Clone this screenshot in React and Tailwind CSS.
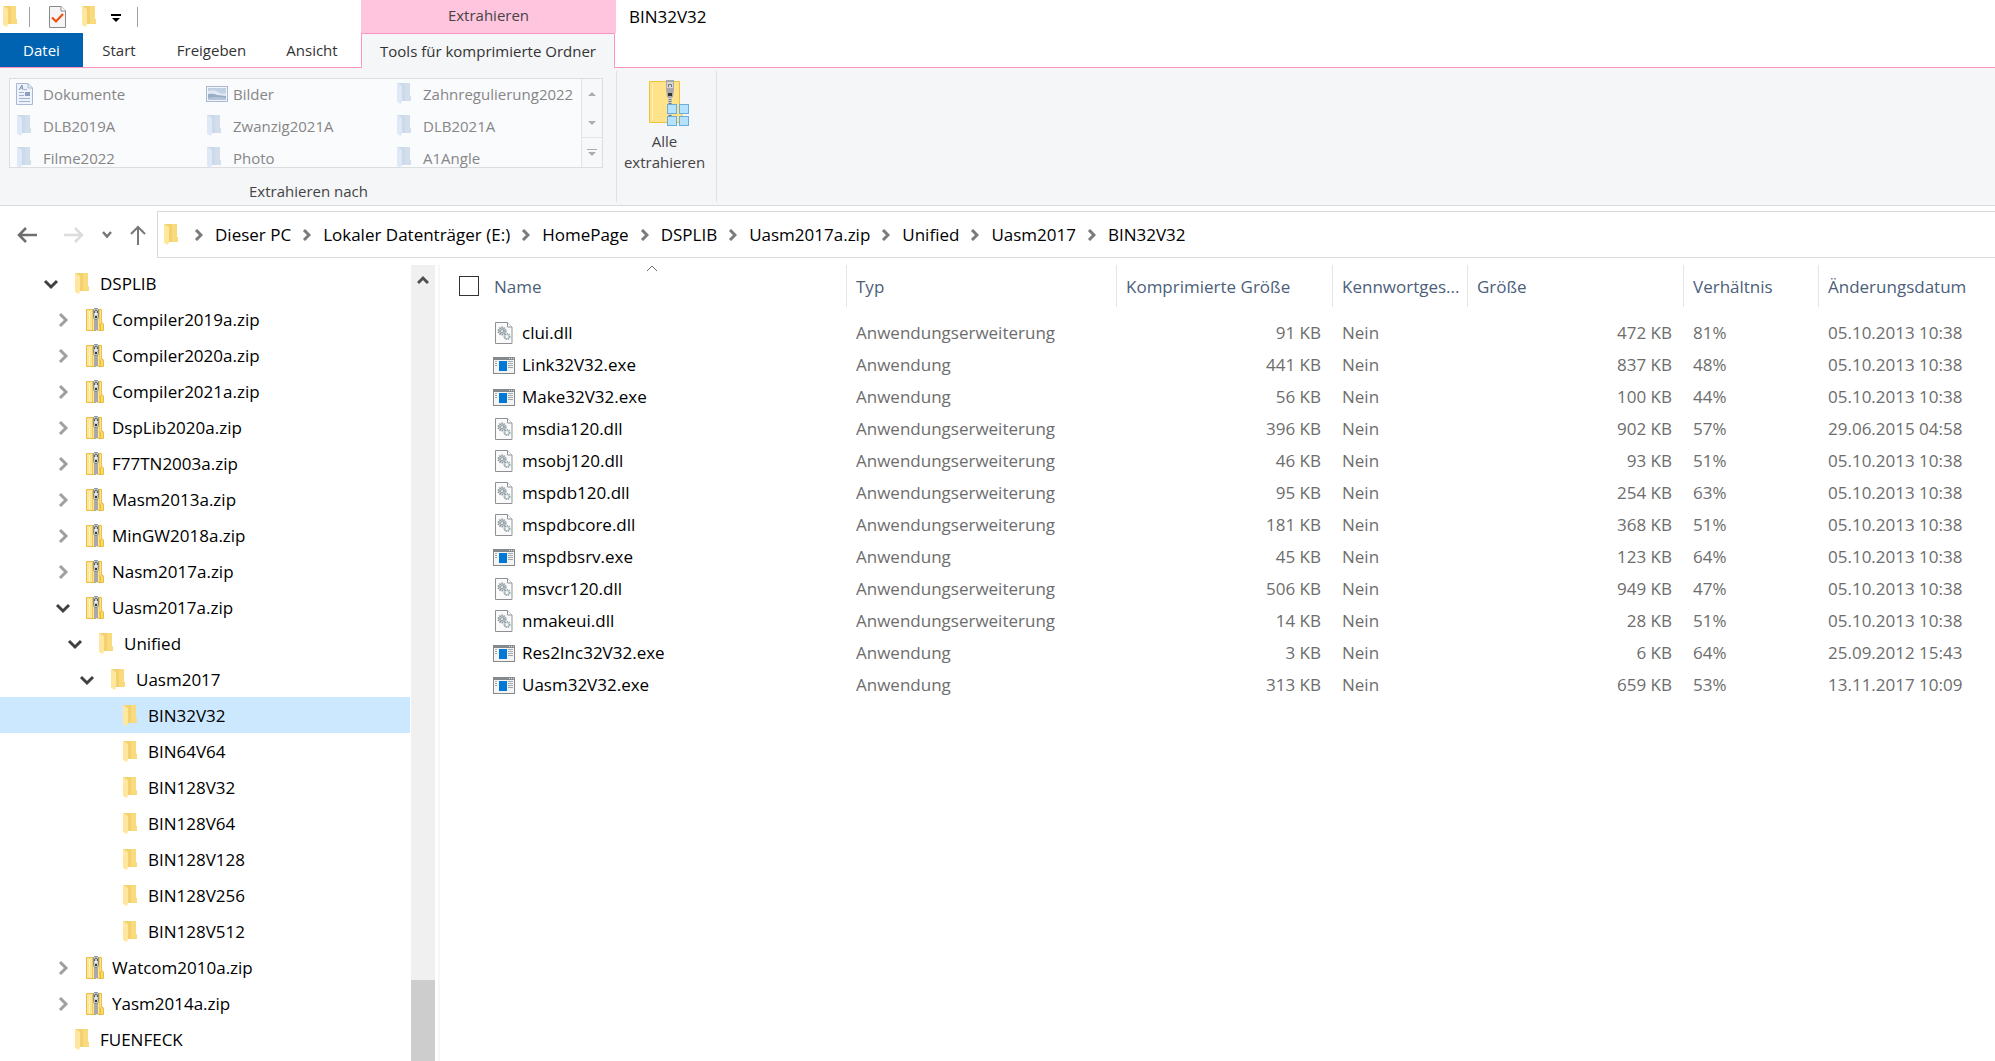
import React from 'react';
import clsx from 'clsx';

const tree = [
  { name: 'DSPLIB', level: 0, icon: 'folder', state: 'open' },
  { name: 'Compiler2019a.zip', level: 1, icon: 'zip', state: 'closed' },
  { name: 'Compiler2020a.zip', level: 1, icon: 'zip', state: 'closed' },
  { name: 'Compiler2021a.zip', level: 1, icon: 'zip', state: 'closed' },
  { name: 'DspLib2020a.zip', level: 1, icon: 'zip', state: 'closed' },
  { name: 'F77TN2003a.zip', level: 1, icon: 'zip', state: 'closed' },
  { name: 'Masm2013a.zip', level: 1, icon: 'zip', state: 'closed' },
  { name: 'MinGW2018a.zip', level: 1, icon: 'zip', state: 'closed' },
  { name: 'Nasm2017a.zip', level: 1, icon: 'zip', state: 'closed' },
  { name: 'Uasm2017a.zip', level: 1, icon: 'zip', state: 'open' },
  { name: 'Unified', level: 2, icon: 'folder', state: 'open' },
  { name: 'Uasm2017', level: 3, icon: 'folder', state: 'open' },
  { name: 'BIN32V32', level: 4, icon: 'folder', selected: true },
  { name: 'BIN64V64', level: 4, icon: 'folder' },
  { name: 'BIN128V32', level: 4, icon: 'folder' },
  { name: 'BIN128V64', level: 4, icon: 'folder' },
  { name: 'BIN128V128', level: 4, icon: 'folder' },
  { name: 'BIN128V256', level: 4, icon: 'folder' },
  { name: 'BIN128V512', level: 4, icon: 'folder' },
  { name: 'Watcom2010a.zip', level: 1, icon: 'zip', state: 'closed' },
  { name: 'Yasm2014a.zip', level: 1, icon: 'zip', state: 'closed' },
  { name: 'FUENFECK', level: 0, icon: 'folder' },
];

const indent = ['pl-[42px]', 'pl-[54px]', 'pl-[66px]', 'pl-[78px]', 'pl-[90px]'];

const DLL = 'Anwendungserweiterung';
const EXE = 'Anwendung';

const files = [
  ['clui.dll', DLL, '91 KB', 'Nein', '472 KB', '81%', '05.10.2013 10:38'],
  ['Link32V32.exe', EXE, '441 KB', 'Nein', '837 KB', '48%', '05.10.2013 10:38'],
  ['Make32V32.exe', EXE, '56 KB', 'Nein', '100 KB', '44%', '05.10.2013 10:38'],
  ['msdia120.dll', DLL, '396 KB', 'Nein', '902 KB', '57%', '29.06.2015 04:58'],
  ['msobj120.dll', DLL, '46 KB', 'Nein', '93 KB', '51%', '05.10.2013 10:38'],
  ['mspdb120.dll', DLL, '95 KB', 'Nein', '254 KB', '63%', '05.10.2013 10:38'],
  ['mspdbcore.dll', DLL, '181 KB', 'Nein', '368 KB', '51%', '05.10.2013 10:38'],
  ['mspdbsrv.exe', EXE, '45 KB', 'Nein', '123 KB', '64%', '05.10.2013 10:38'],
  ['msvcr120.dll', DLL, '506 KB', 'Nein', '949 KB', '47%', '05.10.2013 10:38'],
  ['nmakeui.dll', DLL, '14 KB', 'Nein', '28 KB', '51%', '05.10.2013 10:38'],
  ['Res2Inc32V32.exe', EXE, '3 KB', 'Nein', '6 KB', '64%', '25.09.2012 15:43'],
  ['Uasm32V32.exe', EXE, '313 KB', 'Nein', '659 KB', '53%', '13.11.2017 10:09'],
];

const headers = ['Typ', 'Komprimierte Größe', 'Kennwortges...', 'Größe', 'Verhältnis', 'Änderungsdatum'];

const crumbs = ['Dieser PC', 'Lokaler Datenträger (E:)', 'HomePage', 'DSPLIB', 'Uasm2017a.zip', 'Unified', 'Uasm2017', 'BIN32V32'];

const targets = [
  { name: 'Dokumente', icon: 'doc' },
  { name: 'Bilder', icon: 'picture' },
  { name: 'Zahnregulierung2022', icon: 'folder' },
  { name: 'DLB2019A', icon: 'folder' },
  { name: 'Zwanzig2021A', icon: 'folder' },
  { name: 'DLB2021A', icon: 'folder' },
  { name: 'Filme2022', icon: 'folder' },
  { name: 'Photo', icon: 'folder' },
  { name: 'A1Angle', icon: 'folder' },
];

const FolderIcon = ({ muted }) => (
  <svg width="18" height="22" viewBox="0 0 18 22" className="shrink-0">
    <path d="M1 0H14V13H15V18H5Z" fill={muted ? '#ccd9ea' : '#f3d170'} />
    <path d="M9 0H14V13H15V18H9Z" fill={muted ? '#d3deed' : '#f9da7c'} />
    <path d="M1 0L6 3V18L5 21L1 19Z" fill={muted ? '#dfe8f6' : '#ffe89d'} />
  </svg>
);

const ZipIcon = () => (
  <svg width="18" height="23" viewBox="0 0 18 23" className="shrink-0">
    <path d="M.5 1.500H15.500V22.500H.5Z" fill="#ffe591" stroke="#e8bf3f" />
    <path d="M14.500 22.500V16L16 14.500L17.500 16V22.500Z" fill="#fbd970" stroke="#e8bf3f" />
    <path d="M3.500 3V21" stroke="#fff3c4" />
    <path d="M6.500 2V22M13.500 2V22" stroke="#f1cc5c" />
    <rect x="8" y="10" width="4" height="13" fill="#dcdcd8" />
    <path d="M8 12h2M10 13h2M8 14h2M10 15h2M8 16h2M10 17h2M8 18h2M10 19h2M8 20h2M10 21h2M8 22h2" stroke="#777" />
    <path d="M7.500 1.500L8.500 .5H11.500L12.500 1.500V9.500L11.500 11.500H8.500L7.500 9.500Z" fill="#c9cacb" stroke="#8e9091" />
    <path d="M8.500 5V3Q10 1 11.500 3V5" fill="none" stroke="#5d6062" />
    <rect x="9" y="5" width="2" height="2" fill="#eee" />
    <rect x="9" y="8" width="2" height="2" fill="#333" />
  </svg>
);

const DllIcon = () => (
  <svg width="18" height="22" viewBox="0 0 18 22" className="shrink-0">
    <path d="M.5.5H12.500L17 5V21.500H.5Z" fill="#fafafa" stroke="#8f9294" />
    <path d="M12.500.5V5H17" fill="#fff" stroke="#8f9294" />
    <circle cx="7" cy="9" r="3.500" fill="#c8d0d5" stroke="#8d999f" strokeWidth="2" strokeDasharray="1.400 .8" />
    <circle cx="7" cy="9" r="1.500" fill="#fff" stroke="#8d999f" />
    <circle cx="12" cy="14.500" r="2.700" fill="#d5e0e6" stroke="#9aa7ad" strokeWidth="1.800" strokeDasharray="1.300 .7" />
    <circle cx="12" cy="14.500" r="1" fill="#fff" />
  </svg>
);

const ExeIcon = () => (
  <svg width="22" height="17" viewBox="0 0 22 17" className="shrink-0">
    <rect x=".5" y=".5" width="21" height="16" fill="#f4f4f4" stroke="#85898c" />
    <rect width="22" height="3" fill="#85898c" />
    <path d="M16 1.500h1M18 1.500h1M20 1.500h1" stroke="#e5e5e5" />
    <rect x="6" y="4" width="8" height="10" fill="#0078d7" />
    <path d="M2 4.500h2M2 6.500h2M2 8.500h2M15 4.500h5M15 6.500h5M15 8.500h5M15 10.500h5" stroke="#a5a8aa" />
  </svg>
);

const DocIcon = () => (
  <svg width="17" height="22" viewBox="0 0 17 22" className="shrink-0">
    <path d="M.5.5H12L16.500 5V21.500H.5Z" fill="#eef3fb" stroke="#a9b9d2" />
    <path d="M12 .5V5H16.500" fill="none" stroke="#a9b9d2" />
    <path d="M3 7L6 2L7 7M4 5H7" fill="none" stroke="#7d93b8" />
    <path d="M8 6.500h3M3 9.500h5M3 12.500h5M3 15.500h11M3 18.500h11" stroke="#9fb2d0" />
    <rect x="9" y="9" width="5" height="4" fill="#8ba0c2" />
  </svg>
);

const PictureIcon = () => (
  <svg width="22" height="16" viewBox="0 0 22 16" className="shrink-0">
    <rect x=".5" y=".5" width="21" height="15" fill="#f2f6fc" stroke="#a9b9d2" />
    <rect x="2" y="2" width="18" height="12" fill="#c2d0e4" />
    <path d="M2 5Q8 3 12 6T20 7V10H2Z" fill="#dfe8f4" />
    <path d="M2 8Q7 7 11 9L20 10V14H2Z" fill="#9aacc8" />
    <path d="M2 12Q10 10 20 12V14H2Z" fill="#b4c4da" />
  </svg>
);

const CheckDocIcon = () => (
  <svg width="17" height="22" viewBox="0 0 17 22">
    <path d="M.5.5H12L16.500 5V21.500H.5Z" fill="#f5f5f5" stroke="#8a8a8a" />
    <path d="M12 .5V5H16.500" fill="#fff" stroke="#8a8a8a" />
    <path d="M3 11.500L7 15.500L14 8" fill="none" stroke="#f0520e" strokeWidth="2.200" />
  </svg>
);

const ExtractIcon = () => (
  <svg width="42" height="48" viewBox="0 0 42 48">
    <path d="M1.500 1.500H31.500V26L34 28V42.500H1.500Z" fill="#ffe28a" stroke="#ecc23f" />
    <path d="M4.500 4V40" stroke="#fff0b8" />
    <rect x="20" y="16" width="4" height="24" fill="#d6d6cc" />
    <path d="M22 17V40" stroke="#777" strokeWidth="3" strokeDasharray="1 1" />
    <path d="M18 0H26V9L25 17L23 18H21L19 17L18 9Z" fill="#a8a9aa" />
    <path d="M19 2H25V8H19Z" fill="#d5d5d5" />
    <path d="M20.500 7V4.500H23.500V7" fill="none" stroke="#777" />
    <rect x="20" y="13" width="4" height="3" fill="#333" />
    <g fill="#b5e2ff" stroke="#6cacd8">
      <rect x="19.500" y="24.500" width="9" height="9" />
      <rect x="31.500" y="24.500" width="9" height="9" />
      <rect x="19.500" y="36.500" width="9" height="9" />
      <rect x="31.500" y="36.500" width="9" height="9" />
    </g>
  </svg>
);

const Chevron = ({ open }) =>
  open ? (
    <svg width="18" height="18" viewBox="0 0 18 18" className="shrink-0">
      <path d="M3 6L9 12L15 6" fill="none" stroke="#404040" strokeWidth="3" />
    </svg>
  ) : (
    <svg width="18" height="18" viewBox="0 0 18 18" className="shrink-0">
      <path d="M6 3L12 9L6 15" fill="none" stroke="#a0a0a0" strokeWidth="3" />
    </svg>
  );

const CrumbChevron = () => (
  <svg width="9" height="12" viewBox="0 0 9 12" className="shrink-0">
    <path d="M2 1L7 6L2 11" fill="none" stroke="#7b7b7b" strokeWidth="3" />
  </svg>
);

const TitleBar = () => (
  <header className="flex h-[33px] bg-white">
    <div className="flex w-[361px] shrink-0 items-center pl-[2px]">
      <FolderIcon />
      <span className="ml-[9px] h-5 w-px bg-[#a0a0a0]" />
      <button aria-label="Eigenschaften" className="ml-[19px]"><CheckDocIcon /></button>
      <button aria-label="Neuer Ordner" className="ml-[15px]"><FolderIcon /></button>
      <button aria-label="Symbolleiste anpassen" className="ml-3 pt-1">
        <svg width="10" height="9" viewBox="0 0 10 9">
          <path d="M0 0H10V2H0ZM1 4H9L5 8Z" fill="#000" />
        </svg>
      </button>
      <span className="ml-4 h-5 w-px bg-[#a0a0a0]" />
    </div>
    <div className="flex w-[255px] shrink-0 items-center justify-center bg-[#ffc5de] pb-0.5 text-[15px] text-[#444]">
      Extrahieren
    </div>
    <h1 className="pl-[13px] text-[17px] leading-[33px] text-black">BIN32V32</h1>
  </header>
);

const Tabs = () => (
  <nav className="flex h-[35px] bg-white text-[15px] text-[#333]">
    <button className="w-[83px] border-b border-[#ff94c1] bg-[#0063b1] text-white">Datei</button>
    <div className="flex w-[278px] border-b border-[#ff94c1]">
      <button className="w-[72px]">Start</button>
      <button className="w-[113px]">Freigeben</button>
      <button className="w-[88px]">Ansicht</button>
    </div>
    <button className="w-[254px] border border-b-0 border-[#ff94c1] bg-[#f4f6f8] whitespace-nowrap">
      Tools für komprimierte Ordner
    </button>
    <div className="flex-1 border-b border-[#ff94c1]" />
  </nav>
);

const TargetIcon = ({ icon }) => {
  if (icon === 'doc') return <DocIcon />;
  if (icon === 'picture') return <PictureIcon />;
  return <FolderIcon muted />;
};

const Ribbon = () => (
  <section className="flex h-[138px] border-b border-[#dadbdc] bg-[#f4f6f8] pt-[3px] text-[15px] text-[#444]">
    <div className="mb-[3px] w-[617px] border-r border-[#e0e1e2] pt-[7px] pl-[9px]">
      <div className="flex h-[90px] w-[594px] border border-[#dcdddf] bg-[#fafbfd]">
        <ul className="grid flex-1 auto-rows-[29px] grid-cols-[190px_190px_191px] gap-y-[3px] text-[#868686]">
          {targets.map((t) => (
            <li key={t.name}>
              <button className="flex h-full items-center pl-[6px] leading-4">
                <span className="flex w-[27px]"><TargetIcon icon={t.icon} /></span>
                {t.name}
              </button>
            </li>
          ))}
        </ul>
        <div className="flex w-[22px] flex-col border-l border-[#e3e4e6] bg-[#f6f8fa]">
          <button aria-label="Nach oben" className="flex flex-1 items-center justify-center">
            <svg width="8" height="4"><path d="M0 4L4 0L8 4Z" fill="#a9adb8" /></svg>
          </button>
          <button aria-label="Nach unten" className="flex flex-1 items-center justify-center">
            <svg width="8" height="4"><path d="M0 0H8L4 4Z" fill="#a9adb8" /></svg>
          </button>
          <button aria-label="Mehr" className="flex flex-1 items-center justify-center border-t border-[#e3e4e6]">
            <svg width="10" height="8"><path d="M0 0H10V1H0ZM1 3H9L5 7Z" fill="#a9adb8" /></svg>
          </button>
        </div>
      </div>
      <p className="mt-[13px] pr-2 text-center leading-5">Extrahieren nach</p>
    </div>
    <div className="mb-[3px] w-[100px] border-r border-[#e0e1e2]">
      <button className="flex w-full flex-col items-center pt-[9px] pr-1 leading-[21px]">
        <span className="pl-2"><ExtractIcon /></span>
        <span className="mt-[3px]">Alle<br />extrahieren</span>
      </button>
    </div>
  </section>
);

const AddressBar = () => (
  <div className="flex h-[59px] bg-white pt-[5px] pb-[7px]">
    <div className="flex w-[157px] shrink-0 items-center pl-[17px]">
      <button aria-label="Zurück">
        <svg width="20" height="16" viewBox="0 0 20 16" fill="none" stroke="#6e6e6e" strokeWidth="2.500">
          <path d="M20 8H2M9 1L2 8L9 15" />
        </svg>
      </button>
      <button aria-label="Vorwärts" className="ml-[27px]">
        <svg width="20" height="16" viewBox="0 0 20 16" fill="none" stroke="#dcdcdc" strokeWidth="2.500">
          <path d="M0 8H18M11 1L18 8L11 15" />
        </svg>
      </button>
      <button aria-label="Verlauf" className="ml-[18px]">
        <svg width="10" height="8" viewBox="0 0 10 8" fill="none" stroke="#777" strokeWidth="2.500">
          <path d="M1 1L5 5.500L9 1" />
        </svg>
      </button>
      <button aria-label="Nach oben" className="ml-[18px]">
        <svg width="16" height="20" viewBox="0 0 16 20" fill="none" stroke="#777" strokeWidth="2">
          <path d="M8 20V2M1 9L8 2L15 9" />
        </svg>
      </button>
    </div>
    <div className="flex flex-1 items-center border border-r-0 border-[#d9d9d9] pl-[5px] text-[17px] text-black">
      <FolderIcon />
      <ol className="flex pl-0.5">
        {crumbs.map((c) => (
          <li key={c} className="flex items-center gap-3 pl-[11px]">
            <CrumbChevron />
            <a href="#">{c}</a>
          </li>
        ))}
      </ol>
    </div>
  </div>
);

const TreePane = () => (
  <aside className="flex w-[440px] shrink-0 border-r-2 border-[#f7f7f7]">
    <ul className="w-[411px] text-[17px] text-black">
      {tree.map((n) => (
        <li key={n.name} className="pr-px">
          <button className={clsx('flex h-9 w-full items-center pt-px', indent[n.level], n.selected && 'bg-[#cce8ff]')}>
            {n.state ? <Chevron open={n.state === 'open'} /> : <span className="w-[18px]" />}
            <span className="mr-2 ml-[14px]">
              {n.icon === 'zip' ? <ZipIcon /> : <FolderIcon />}
            </span>
            {n.name}
          </button>
        </li>
      ))}
    </ul>
    <div className="flex w-6 flex-col bg-[#f0f0f0]">
      <button aria-label="Nach oben scrollen" className="flex h-[30px] items-center justify-center">
        <svg width="12" height="10" viewBox="0 0 12 10">
          <path d="M1 8L6 3L11 8" fill="none" stroke="#505050" strokeWidth="3" />
        </svg>
      </button>
      <div className="mt-auto h-[81px] bg-[#cdcdcd]" />
    </div>
  </aside>
);

const FileList = () => (
  <main className="min-w-0 flex-1">
    <table className="w-full table-fixed border-separate border-spacing-0 text-left text-[17px] whitespace-nowrap text-[#6d6d6d]">
      <colgroup>
        <col className="w-[407px]" />
        <col className="w-[270px]" />
        <col className="w-[216px]" />
        <col className="w-[135px]" />
        <col className="w-[216px]" />
        <col className="w-[135px]" />
        <col />
      </colgroup>
      <thead className="text-[#4c607a]">
        <tr className="h-[42px]">
          <th className="relative border-r border-[#e5e5e5] pl-[19px] font-normal">
            <svg width="12" height="7" viewBox="0 0 12 7" className="absolute top-0 left-[206px]">
              <path d="M1 6L6 1L11 6" fill="none" stroke="#6d6d6d" />
            </svg>
            <span className="flex items-center gap-[15px]">
              <input
                type="checkbox"
                aria-label="Alle auswählen"
                className="size-5 appearance-none border border-[#333] bg-white"
              />
              <span className="pt-0.5">Name</span>
            </span>
          </th>
          {headers.map((h) => (
            <th key={h} className="border-r border-[#e5e5e5] pt-0.5 pl-[9px] font-normal last:border-r-0">{h}</th>
          ))}
        </tr>
      </thead>
      <tbody>
        <tr aria-hidden="true" className="h-[10px]"><td colSpan={7} /></tr>
        {files.map(([name, type, packed, locked, size, ratio, date]) => (
          <tr key={name} className="h-8">
            <td className="pl-[53px]">
              <span className="flex items-center text-black">
                <span className="flex w-[29px]">
                  {type === EXE ? <ExeIcon /> : <span className="pl-[2px]"><DllIcon /></span>}
                </span>
                {name}
              </span>
            </td>
            <td className="pl-[9px]">{type}</td>
            <td className="pr-3 text-right">{packed}</td>
            <td className="pl-[9px]">{locked}</td>
            <td className="pr-3 text-right">{size}</td>
            <td className="pl-[9px]">{ratio}</td>
            <td className="pl-[9px]">{date}</td>
          </tr>
        ))}
      </tbody>
    </table>
  </main>
);

export default function App() {
  return (
    <div className="flex min-h-screen flex-col bg-white font-['Open_Sans','Noto_Sans',sans-serif]">
      <TitleBar />
      <Tabs />
      <Ribbon />
      <AddressBar />
      <div className="flex flex-1">
        <TreePane />
        <FileList />
      </div>
    </div>
  );
}
